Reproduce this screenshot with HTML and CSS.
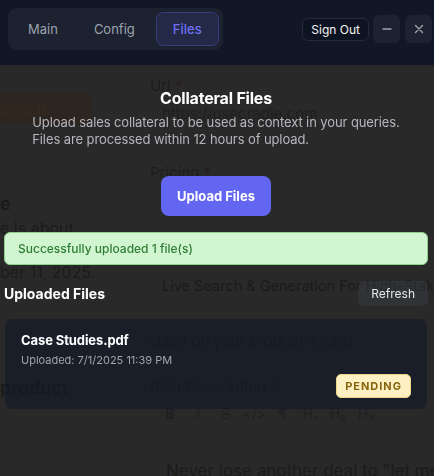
FILE: index.html
```html
<!DOCTYPE html>
<html lang="en">
<head>
<meta charset="utf-8">
<title>Collateral Files</title>
<link rel="stylesheet" href="styles.css">
</head>
<body>
<header class="topbar">
  <nav class="tabs">
    <button class="tab">Main</button>
    <button class="tab">Config</button>
    <button class="tab tab-active">Files</button>
  </nav>
  <div class="actions">
    <button class="signout">Sign Out</button>
    <button class="winbtn" aria-label="Minimize"><svg width="12" height="12" viewBox="0 0 12 12"><path d="M2 6h8" stroke="#9ca3af" stroke-width="1.4" stroke-linecap="round"/></svg></button>
    <button class="winbtn" aria-label="Close"><svg width="12" height="12" viewBox="0 0 12 12"><path d="M2.5 2.5l7 7M9.5 2.5l-7 7" stroke="#9ca3af" stroke-width="1.4" stroke-linecap="round"/></svg></button>
  </div>
</header>

<main class="page">
  <div class="col-left">
    <div class="bg-launch">Launch</div>
    <div class="bg-heading">e</div>
    <div class="bg-text bg-about">e is about</div>
    <div class="bg-text bg-date">ber 11, 2025.</div>
    <div class="bg-box">product</div>
  </div>
  <div class="col-right">
    <div class="bg-label">Url <span>*</span></div>
    <div class="bg-input">https://usecradle.com</div>
    <div class="bg-label bg-pricing">Pricing <span>*</span></div>
    <div class="bg-input bg-tagline">Live Search &amp; Generation For High-Stakes Deals</div>
    <div class="bg-label bg-used">Used on your product's card</div>
    <div class="bg-label bg-rich">Rich Description <span>*</span></div>
    <div class="bg-toolbar"><b>B</b><i>I</i><s>S</s><span>&lt;/&gt;</span><span>¶</span><span>H₁</span><span>H₂</span><span>H₃</span></div>
    <div class="bg-editor">Never lose another deal to "let me check and get back to you"</div>
  </div>
</main>

<div class="overlay">
  <section class="modal">
    <h1 class="modal-title">Collateral Files</h1>
    <div class="desc-wrap">
      <p class="desc">Upload sales collateral to be used as context in your queries.<br>Files are processed within 12 hours of upload.</p>
    </div>
    <button class="upload">Upload Files</button>
    <div class="success">Successfully uploaded 1 file(s)</div>
    <div class="list-head">
      <h2 class="list-title">Uploaded Files</h2>
      <button class="refresh">Refresh</button>
    </div>
    <div class="file-card">
      <div class="file-name">Case Studies.pdf</div>
      <div class="file-date">Uploaded: 7/1/2025 11:39 PM</div>
      <span class="badge">PENDING</span>
    </div>
  </section>
</div>
</body>
</html>
```

FILE: styles.css
```css
* { box-sizing: border-box; }
html, body { margin: 0; padding: 0; }
body {
  width: 434px;
  height: 476px;
  overflow: hidden;
  background: #292929;
  font-family: Inter, "Noto Sans", "Liberation Sans", sans-serif;
  color: #fff;
}
button { font-family: inherit; cursor: pointer; }

.topbar {
  height: 65px;
  background: #111726;
  display: flex;
  justify-content: space-between;
  align-items: flex-start;
  padding: 8px 2px 0 8px;
  position: relative;
  z-index: 2;
}
.tabs {
  display: flex;
  gap: 5px;
  background: #1d2230;
  border-radius: 9px;
  padding: 4px;
  height: 42px;
}
.tab {
  height: 34px;
  padding: 0 15px;
  border: 1px solid transparent;
  background: transparent;
  border-radius: 7px;
  color: #9ca3af;
  font-size: 13px;
}
.tab:first-child { padding: 0 14px 0 15px; }
.tab-active {
  padding: 0 16px;
  background: #242948;
  border-color: #363c7a;
  color: #6e72f2;
  font-weight: 500;
}
.actions {
  display: flex;
  align-items: center;
  gap: 4px;
  height: 28px;
  margin-top: 7px;
}
.signout {
  height: 23px;
  padding: 0 8px;
  background: #0e1321;
  border: 1px solid #242a37;
  border-radius: 6px;
  color: #f3f4f6;
  font-size: 12px;
}
.winbtn {
  width: 27px;
  height: 28px;
  background: #1d2230;
  border: none;
  border-radius: 6px;
  display: flex;
  align-items: center;
  justify-content: center;
  padding: 0;
}
.winbtn + .winbtn { margin-left: 1px; }

/* dimmed page behind the dialog */
.page {
  display: flex;
  color: #1b1b1b;
}
.col-left {
  width: 150px;
  flex: none;
  padding-top: 28px;
  white-space: nowrap;
}
.bg-launch {
  width: 93px;
  height: 32px;
  background: #2d2520;
  color: #35291f;
  border-radius: 0 6px 6px 0;
  display: flex;
  align-items: center;
  font-size: 16px;
  text-indent: -9px;
}
.bg-heading {
  margin-top: 67px;
  height: 24px;
  line-height: 24px;
  font-size: 18px;
  font-weight: 600;
  color: #1a1a1a;
}
.bg-text {
  font-size: 16px;
  line-height: 22px;
  height: 22px;
  color: #1b1b1b;
}
.bg-about { margin-top: 1px; }
.bg-date { margin-top: 22px; }
.bg-box {
  margin-top: 88px;
  width: 118px;
  height: 34px;
  border-right: 1px solid #242424;
  font-size: 18px;
  font-weight: 600;
  line-height: 34px;
  color: #1b1b1b;
}
.col-right {
  flex: 1;
  padding-top: 11px;
  white-space: nowrap;
  overflow: hidden;
}
.bg-label { font-size: 15px; line-height: 20px; height: 20px; color: #1d1d1d; }
.bg-label span { color: #271d1d; }
.bg-input { margin-left: 12px; margin-top: 8px; font-size: 15px; line-height: 20px; color: #1f1f1f; }
.bg-pricing { margin-top: 39px; }
.bg-tagline { margin-top: 93px; font-size: 14.5px; color: #1b1b1b; }
.bg-used { margin-top: 35px; }
.bg-rich { margin-top: 26px; }
.bg-toolbar {
  display: flex;
  margin-left: 6px;
  margin-top: 7px;
  padding-bottom: 8px;
  border-bottom: 1px solid #262626;
  font-size: 14px;
  line-height: 20px;
  color: #202020;
}
.bg-toolbar > * {
  width: 28px;
  text-align: center;
}
.bg-editor {
  margin-left: 16px;
  margin-top: 27px;
  font-size: 17px;
  line-height: 22px;
  color: #1c1c1c;
}

/* overlay dialog */
.overlay {
  position: fixed;
  top: 65px;
  left: 0;
  right: 0;
  bottom: 0;
  z-index: 1;
}
.modal {
  padding: 23px 6px 0 4px;
  display: flex;
  flex-direction: column;
  align-items: center;
}
.modal-title {
  margin: 0;
  font-size: 16px;
  font-weight: 700;
  line-height: 20px;
  letter-spacing: -0.2px;
}
.desc-wrap { margin-top: 6px; }
.desc {
  margin: 0;
  font-size: 13px;
  line-height: 17px;
  color: #b4b6bd;
  text-align: left;
  letter-spacing: -0.1px;
}
.upload {
  margin-top: 28px;
  height: 40px;
  padding: 0 16px;
  background: #6366f1;
  border: none;
  border-radius: 8px;
  color: #fff;
  font-size: 13px;
  font-weight: 700;
}
.success {
  align-self: stretch;
  margin-top: 16px;
  height: 33px;
  display: flex;
  align-items: center;
  padding-left: 13px;
  background: #d1f5d0;
  border: 1px solid #8fd08c;
  border-radius: 6px;
  color: #2f7d35;
  font-size: 12px;
  font-weight: 500;
}
.list-head {
  align-self: stretch;
  display: flex;
  justify-content: space-between;
  align-items: center;
  margin-top: 16px;
}
.list-title {
  margin: 0;
  font-size: 14px;
  font-weight: 700;
}
.refresh {
  height: 25px;
  padding: 0 13px;
  background: rgba(64, 70, 84, 0.32);
  border: none;
  border-radius: 6px;
  color: #e5e7eb;
  font-size: 12px;
}
.file-card {
  align-self: stretch;
  margin: 13px 1px 0 1px;
  padding: 12px 16px 11px 16px;
  background: rgba(17, 24, 40, 0.62);
  border-radius: 8px;
  display: flex;
  flex-direction: column;
}
.file-name {
  font-size: 13px;
  font-weight: 700;
  line-height: 18px;
  letter-spacing: -0.1px;
}
.file-date {
  margin-top: 4px;
  font-size: 11px;
  line-height: 14px;
  color: #a1a4ad;
}
.badge {
  align-self: flex-end;
  margin-top: 7px;
  height: 24px;
  padding: 0 8px;
  display: flex;
  align-items: center;
  background: #fdf1c4;
  border: 1px solid #f0d486;
  border-radius: 5px;
  color: #87650f;
  font-size: 11px;
  font-weight: 700;
  letter-spacing: 1px;
}
```
